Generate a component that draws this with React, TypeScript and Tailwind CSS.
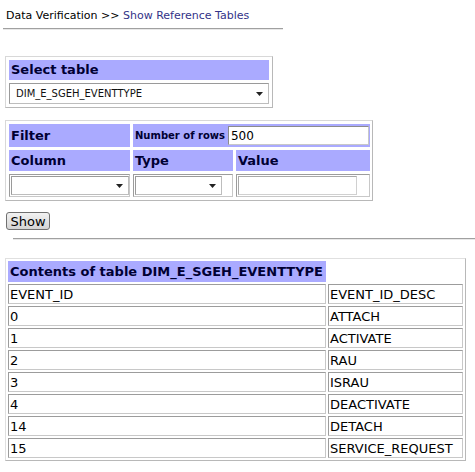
import React from 'react'

const ROWS: [string, string][] = [
  ['EVENT_ID', 'EVENT_ID_DESC'],
  ['0', 'ATTACH'],
  ['1', 'ACTIVATE'],
  ['2', 'RAU'],
  ['3', 'ISRAU'],
  ['4', 'DEACTIVATE'],
  ['14', 'DETACH'],
  ['15', 'SERVICE_REQUEST'],
]

function Caret() {
  return (
    <svg width="7" height="4" viewBox="0 0 7 4" className="shrink-0">
      <path d="M0 0h7L3.5 4z" fill="#222" />
    </svg>
  )
}

function FakeSelect({ w, text }: { w: string; text?: string }) {
  return (
    <div className={`${w} h-full flex items-center justify-between bg-white border border-[#bdbdbd] border-t-[#9a9a9a] border-l-[#9a9a9a] pl-[6px] pr-[5px]`}>
      <span className="text-[10px] text-[#111]">{text}</span>
      <Caret />
    </div>
  )
}

const cell = 'border border-[#c8c8c8] border-t-[#9c9c9c] border-l-[#9c9c9c]'
const head = 'bg-[#aaaaff] font-bold text-[13px] text-[#000033] flex items-center pl-[2px]'

export default function App() {
  return (
    <div className="w-[475px] h-[472px] bg-white overflow-hidden text-black" style={{ fontFamily: '"DejaVu Sans", Verdana, sans-serif' }}>
      {/* breadcrumb */}
      <div className="pl-[6px] pt-[9px] text-[11px] leading-[14px]">
        Data Verification &gt;&gt; <span className="text-[#333388]">Show Reference Tables</span>
      </div>
      <div className="ml-[3px] mt-[5px] w-[280px] h-[2px] border-t border-[#a0a0a0] border-b border-b-[#e8e8e8]" />

      {/* select table */}
      <div className="ml-[5px] mt-[26px] w-[268px] border border-[#d8d8d8] border-r-[#b8b8b8] border-b-[#b8b8b8] p-[3px] flex flex-col gap-[3px]">
        <div className={`${head} h-[20px]`}>Select table</div>
        <div className="h-[21px]">
          <FakeSelect w="w-full" text="DIM_E_SGEH_EVENTTYPE" />
        </div>
      </div>

      {/* filter */}
      <div className="ml-[5px] mt-[12px] w-[368px] border border-[#d8d8d8] border-r-[#b8b8b8] border-b-[#b8b8b8] p-[3px] grid grid-cols-[121px_100px_134px] gap-[3px]">
        <div className={`${head} h-[23px]`}>Filter</div>
        <div className="col-span-2 bg-[#aaaaff] h-[23px] flex items-center pl-[2px] pr-px">
          <span className="font-bold text-[10px] text-[#000033] mr-[3px] whitespace-nowrap">Number of rows</span>
          <div className="flex-1 h-[19px] bg-white border border-[#c8c8c8] border-t-[#8c8c8c] border-l-[#8c8c8c] text-[12px] flex items-center pl-[2px]">500</div>
        </div>
        <div className={`${head} h-[21px]`}>Column</div>
        <div className={`${head} h-[21px]`}>Type</div>
        <div className={`${head} h-[21px]`}>Value</div>
        <div className={`${cell} h-[23px] p-px`}>
          <FakeSelect w="w-[118px]" />
        </div>
        <div className={`${cell} h-[23px] p-px`}>
          <FakeSelect w="w-[87px]" />
        </div>
        <div className={`${cell} h-[23px] p-px`}>
          <div className="w-[119px] h-full bg-white border border-[#d0d0d0] border-t-[#a8a8a8] border-l-[#a8a8a8]" />
        </div>
      </div>

      {/* show */}
      <button className="ml-[6px] mt-[11px] w-[44px] h-[18px] rounded-[3px] border border-[#707070] bg-gradient-to-b from-[#f2f2f2] to-[#d4d4d4] text-[13px] leading-none flex items-center justify-center">
        Show
      </button>
      <div className="ml-[13px] mt-[8px] w-[462px] h-[2px] border-t border-[#a0a0a0] border-b border-b-[#e8e8e8]" />

      {/* contents */}
      <div className="ml-[5px] mt-[18px] w-[461px] border border-[#e0e0e0] border-r-[#b8b8b8] border-b-[#b8b8b8] p-[2px] grid grid-cols-[318px_135px] gap-[2px]">
        <div className={`${head} h-[21px]`}>Contents of table DIM_E_SGEH_EVENTTYPE</div>
        <div />
        {ROWS.map(([a, b]) => (
          <React.Fragment key={a}>
            <div className={`${cell} h-[20px] text-[13px] leading-none flex items-center pl-[1px]`}>{a}</div>
            <div className={`${cell} h-[20px] text-[13px] leading-none flex items-center pl-[1px]`}>{b}</div>
          </React.Fragment>
        ))}
      </div>
    </div>
  )
}
